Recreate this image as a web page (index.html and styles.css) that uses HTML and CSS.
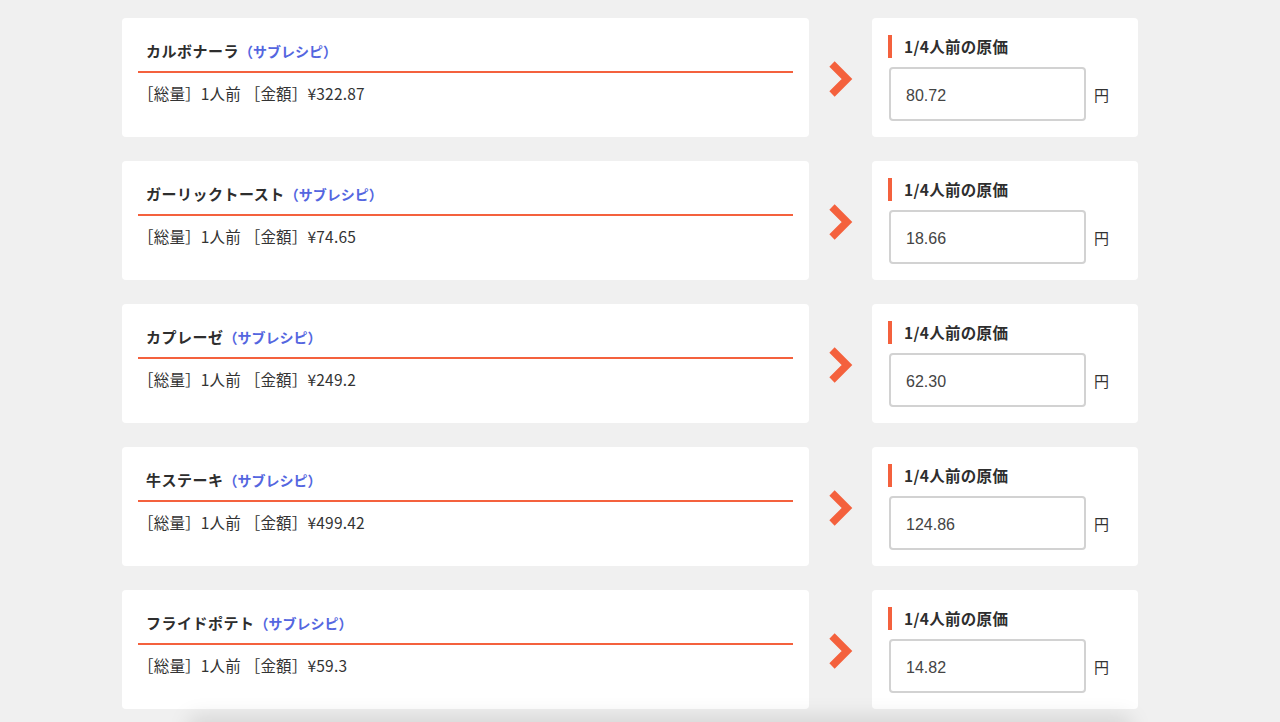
FILE: index.html
```html
<!DOCTYPE html>
<html lang="ja">
<head>
<meta charset="utf-8">
<title>原価</title>
<link rel="stylesheet" href="styles.css">
</head>
<body>
<main class="list">
  <section class="row">
    <div class="recipe">
      <h2 class="recipe-title">カルボナーラ<span class="sub">（サブレシピ）</span></h2>
      <p class="recipe-info">［総量］1人前 ［金額］¥322.87</p>
    </div>
    <div class="arrow"><svg width="26" height="38" viewBox="0 0 26 38"><polyline points="4,4 19,19 4,34" fill="none" stroke="#f4613d" stroke-width="7.5"/></svg></div>
    <div class="cost">
      <div class="cost-label">1/4人前の原価</div>
      <div class="cost-field"><div class="cost-input">80.72</div><span class="yen">円</span></div>
    </div>
  </section>
  <section class="row">
    <div class="recipe">
      <h2 class="recipe-title">ガーリックトースト<span class="sub">（サブレシピ）</span></h2>
      <p class="recipe-info">［総量］1人前 ［金額］¥74.65</p>
    </div>
    <div class="arrow"><svg width="26" height="38" viewBox="0 0 26 38"><polyline points="4,4 19,19 4,34" fill="none" stroke="#f4613d" stroke-width="7.5"/></svg></div>
    <div class="cost">
      <div class="cost-label">1/4人前の原価</div>
      <div class="cost-field"><div class="cost-input">18.66</div><span class="yen">円</span></div>
    </div>
  </section>
  <section class="row">
    <div class="recipe">
      <h2 class="recipe-title">カプレーゼ<span class="sub">（サブレシピ）</span></h2>
      <p class="recipe-info">［総量］1人前 ［金額］¥249.2</p>
    </div>
    <div class="arrow"><svg width="26" height="38" viewBox="0 0 26 38"><polyline points="4,4 19,19 4,34" fill="none" stroke="#f4613d" stroke-width="7.5"/></svg></div>
    <div class="cost">
      <div class="cost-label">1/4人前の原価</div>
      <div class="cost-field"><div class="cost-input">62.30</div><span class="yen">円</span></div>
    </div>
  </section>
  <section class="row">
    <div class="recipe">
      <h2 class="recipe-title">牛ステーキ<span class="sub">（サブレシピ）</span></h2>
      <p class="recipe-info">［総量］1人前 ［金額］¥499.42</p>
    </div>
    <div class="arrow"><svg width="26" height="38" viewBox="0 0 26 38"><polyline points="4,4 19,19 4,34" fill="none" stroke="#f4613d" stroke-width="7.5"/></svg></div>
    <div class="cost">
      <div class="cost-label">1/4人前の原価</div>
      <div class="cost-field"><div class="cost-input">124.86</div><span class="yen">円</span></div>
    </div>
  </section>
  <section class="row">
    <div class="recipe">
      <h2 class="recipe-title">フライドポテト<span class="sub">（サブレシピ）</span></h2>
      <p class="recipe-info">［総量］1人前 ［金額］¥59.3</p>
    </div>
    <div class="arrow"><svg width="26" height="38" viewBox="0 0 26 38"><polyline points="4,4 19,19 4,34" fill="none" stroke="#f4613d" stroke-width="7.5"/></svg></div>
    <div class="cost">
      <div class="cost-label">1/4人前の原価</div>
      <div class="cost-field"><div class="cost-input">14.82</div><span class="yen">円</span></div>
    </div>
  </section>
</main>
<div class="footer-shadow"></div>
</body>
</html>
```
FILE: styles.css
```css
* { box-sizing: border-box; }
html, body { margin: 0; padding: 0; }
body {
  background: #f0f0f0;
  font-family: "Noto Sans CJK JP", "Noto Sans", sans-serif;
  color: #333;
  overflow: hidden;
  height: 722px;
}
.list {
  display: flex;
  flex-direction: column;
  gap: 24px;
  padding: 18px 0 0 122px;
}
.row {
  display: flex;
  align-items: stretch;
}
.recipe {
  width: 687px;
  height: 119px;
  background: #fff;
  border-radius: 4px;
  padding: 0 16px;
}
.recipe-title {
  margin: 0;
  padding: 22px 8px 9px;
  font-size: 15px;
  line-height: 22px;
  font-weight: bold;
  letter-spacing: 0.5px;
  color: #2e2e2e;
  border-bottom: 2px solid #f4613d;
}
.sub {
  font-size: 14px;
  letter-spacing: 0;
  color: #5466e0;
}
.recipe-info {
  margin: 9px 0 0;
  padding: 0;
  font-size: 15.5px;
  line-height: 22px;
  color: #333;
  letter-spacing: 0.2px;
}
.arrow {
  width: 63px;
  display: flex;
  align-items: center;
  padding-left: 19px;
  padding-top: 3px;
}
.arrow svg { display: block; }
.cost {
  width: 266px;
  height: 119px;
  background: #fff;
  border-radius: 4px;
  padding: 17px 16px 0;
}
.cost-label {
  height: 23px;
  border-left: 4px solid #f4613d;
  padding-left: 12px;
  font-size: 15.5px;
  font-weight: bold;
  line-height: 23px;
  letter-spacing: 0.3px;
  color: #2e2e2e;
}
.cost-field {
  display: flex;
  align-items: center;
  gap: 8px;
  margin-top: 9px;
  margin-left: 1px;
}
.cost-input {
  width: 197px;
  height: 54px;
  border: 2px solid #d2d2d2;
  border-radius: 4px;
  padding: 3px 0 0 15px;
  display: flex;
  align-items: center;
  font-family: "Liberation Sans", Arial, sans-serif;
  font-size: 16px;
  color: #444;
}
.yen {
  font-size: 15px;
  color: #333;
  padding-top: 1px;
}
.footer-shadow {
  position: fixed;
  left: 190px;
  right: 150px;
  top: 722px;
  height: 60px;
  background: #e0e0e0;
  box-shadow: 0 -4px 22px rgba(0, 0, 0, 0.13);
}
```
